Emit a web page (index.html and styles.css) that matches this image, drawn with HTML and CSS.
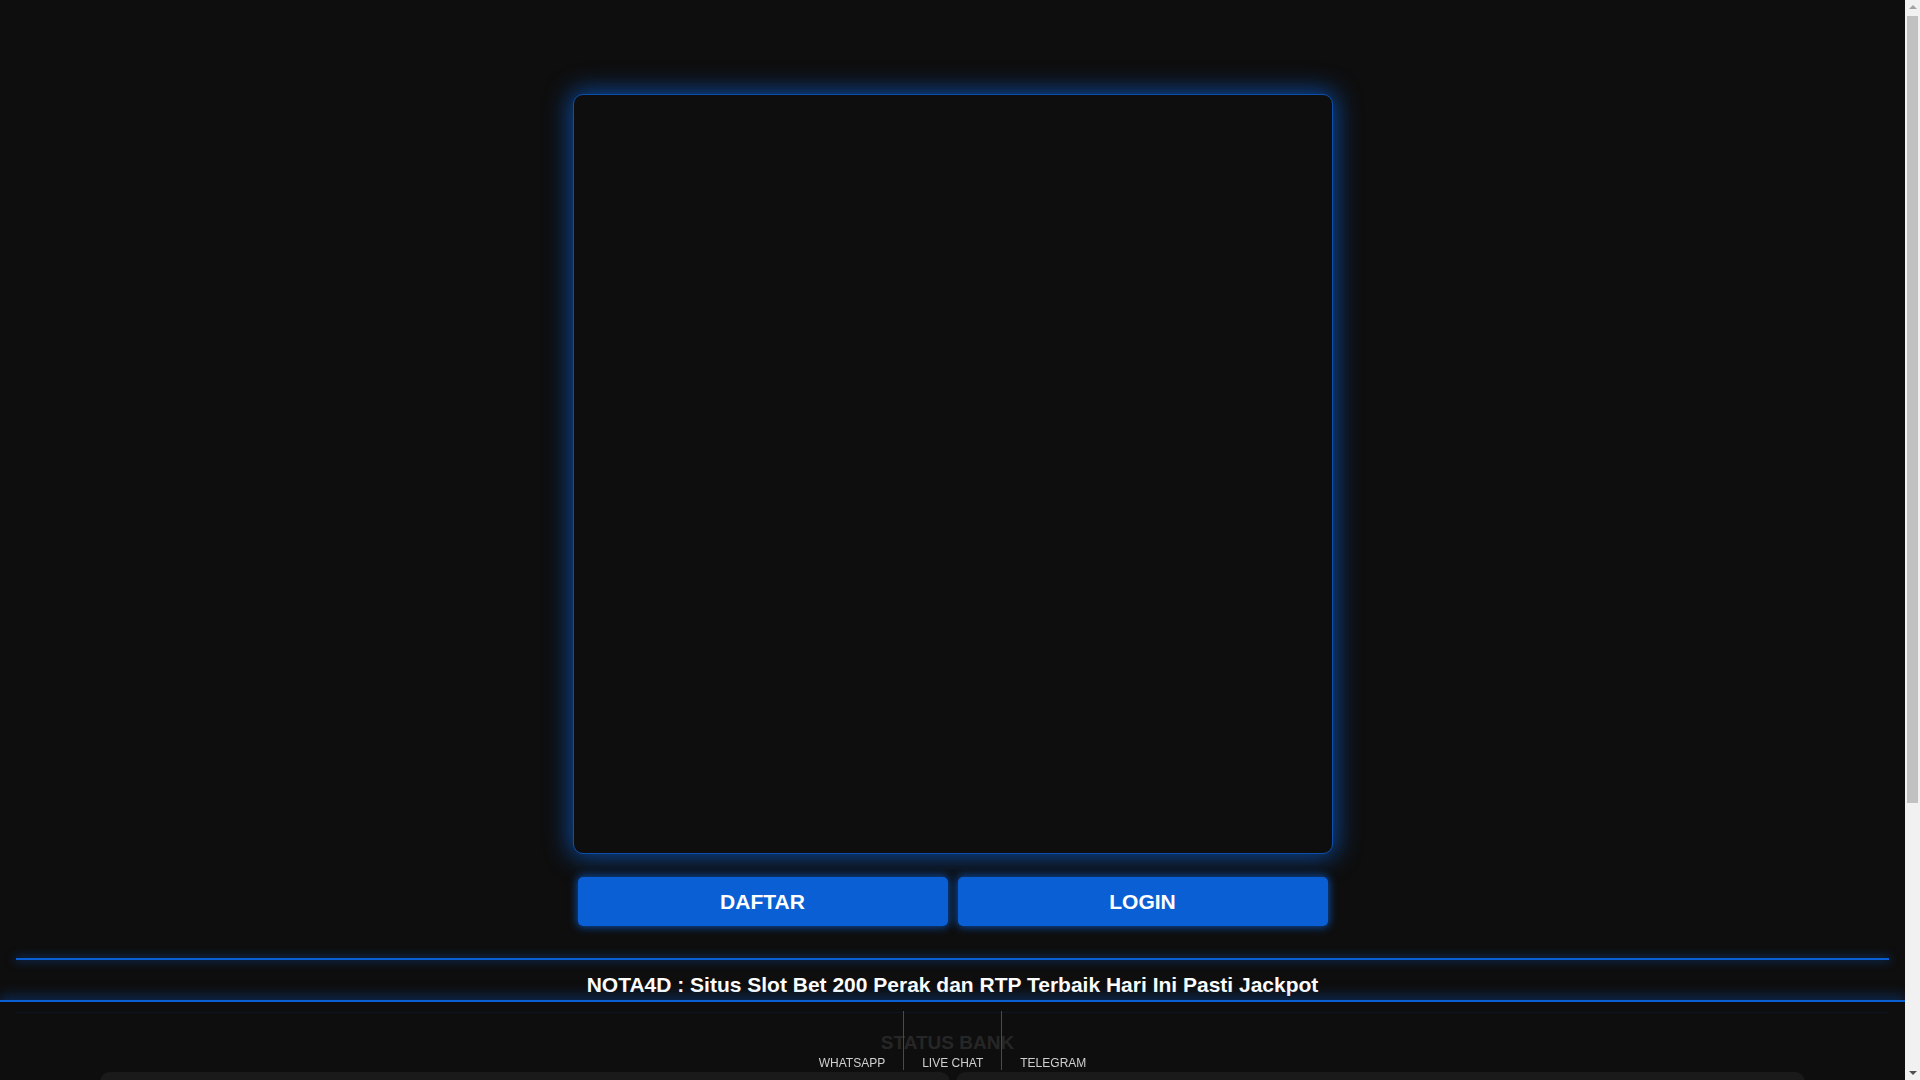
FILE: index.html
```html
<!DOCTYPE html>
<html lang="id">
<head>
<meta charset="utf-8">
<title>NOTA4D</title>
<link rel="stylesheet" href="styles.css">
</head>
<body>
<main class="page">
  <section class="hero">
    <div class="banner"></div>
    <div class="actions">
      <a class="btn" href="#">DAFTAR</a>
      <a class="btn" href="#">LOGIN</a>
    </div>
  </section>
  <hr class="glow-line">
  <h1 class="title">NOTA4D : Situs Slot Bet 200 Perak dan RTP Terbaik Hari Ini Pasti Jackpot</h1>
  <section class="status">
    <h2 class="status-title">STATUS BANK</h2>
    <div class="status-grid">
      <div class="status-card"></div>
      <div class="status-card"></div>
    </div>
  </section>
</main>
<nav class="bottom-nav">
  <a class="nav-item" href="#">WHATSAPP</a>
  <a class="nav-item" href="#">LIVE CHAT</a>
  <a class="nav-item" href="#">TELEGRAM</a>
</nav>
<div class="scrollbar" aria-hidden="true">
  <span class="sb-arrow sb-up"></span>
  <span class="sb-thumb"></span>
  <span class="sb-arrow sb-down"></span>
</div>
</body>
</html>
```
FILE: styles.css
```css
html, body {
  margin: 0;
  padding: 0;
  background: #0e0e0e;
  font-family: "Liberation Sans", Arial, sans-serif;
  color: #fff;
}
body {
  margin-right: 15px;
}
.page {
  padding-top: 94px;
  padding-bottom: 90px;
}
.hero {
  width: 760px;
  margin: 0 auto;
  display: flex;
  flex-direction: column;
}
.banner {
  height: 758px;
  border: 1px solid #0b4fae;
  border-radius: 10px;
  background: #0e0e0e;
  box-shadow: 0 0 24px 3px rgba(10, 95, 212, 0.72);
}
.actions {
  display: flex;
  gap: 10px;
  padding: 0 5px;
  margin-top: 23px;
}
.btn {
  flex: 1;
  height: 49px;
  display: flex;
  align-items: center;
  justify-content: center;
  background: #0a5fd4;
  border-radius: 5px;
  color: #fff;
  font-weight: bold;
  font-size: 21px;
  text-decoration: none;
  box-shadow: 0 0 8px 1px rgba(10, 95, 212, 0.8);
}
.glow-line {
  margin: 32px 16px 0;
  height: 2px;
  border: 0;
  background: #0a5fd4;
  box-shadow: 0 0 10px 1px rgba(10, 95, 212, 0.55);
}
.title {
  margin: 13px 0 0;
  text-align: center;
  font-size: 21px;
  line-height: 24px;
  font-weight: bold;
  color: #fff;
}
.status {
  margin: 15px 16px 0;
  border-top: 1px solid #0c1522;
  padding-top: 19px;
}
.status-title {
  margin: 0;
  padding-right: 10px;
  text-align: center;
  font-size: 19px;
  line-height: 22px;
  font-weight: bold;
  color: #262626;
}
.status-grid {
  display: grid;
  grid-template-columns: 1fr 1fr;
  gap: 6px;
  margin: 18px 84px 0;
}
.status-card {
  height: 280px;
  background: #1a1a1a;
  border-radius: 10px;
}
.bottom-nav {
  position: fixed;
  left: 0;
  right: 15px;
  bottom: 0;
  height: 69px;
  padding-top: 9px;
  border-top: 2px solid #0a5fd4;
  box-shadow: 0 -4px 12px rgba(10, 95, 212, 0.35);
  display: flex;
  justify-content: center;
  align-items: flex-start;
}
.nav-item {
  height: 59px;
  padding: 0 18px;
  box-sizing: border-box;
  display: flex;
  align-items: flex-end;
  color: #cfcfcf;
  font-size: 12px;
  line-height: 14px;
  text-decoration: none;
}
.nav-item + .nav-item {
  border-left: 1px solid #4a4a4a;
}
.scrollbar {
  position: fixed;
  top: 0;
  right: 0;
  bottom: 0;
  width: 15px;
  background: #f1f1f1;
  display: flex;
  flex-direction: column;
  align-items: center;
}
.sb-arrow {
  width: 0;
  height: 0;
  border-left: 4px solid transparent;
  border-right: 4px solid transparent;
  margin: 5px 0;
}
.sb-up {
  border-bottom: 4px solid #a3a3a3;
}
.sb-down {
  border-top: 4px solid #505050;
  margin-top: auto;
}
.sb-thumb {
  width: 11px;
  height: 787px;
  margin-top: 2px;
  background: #c1c1c1;
}
```
